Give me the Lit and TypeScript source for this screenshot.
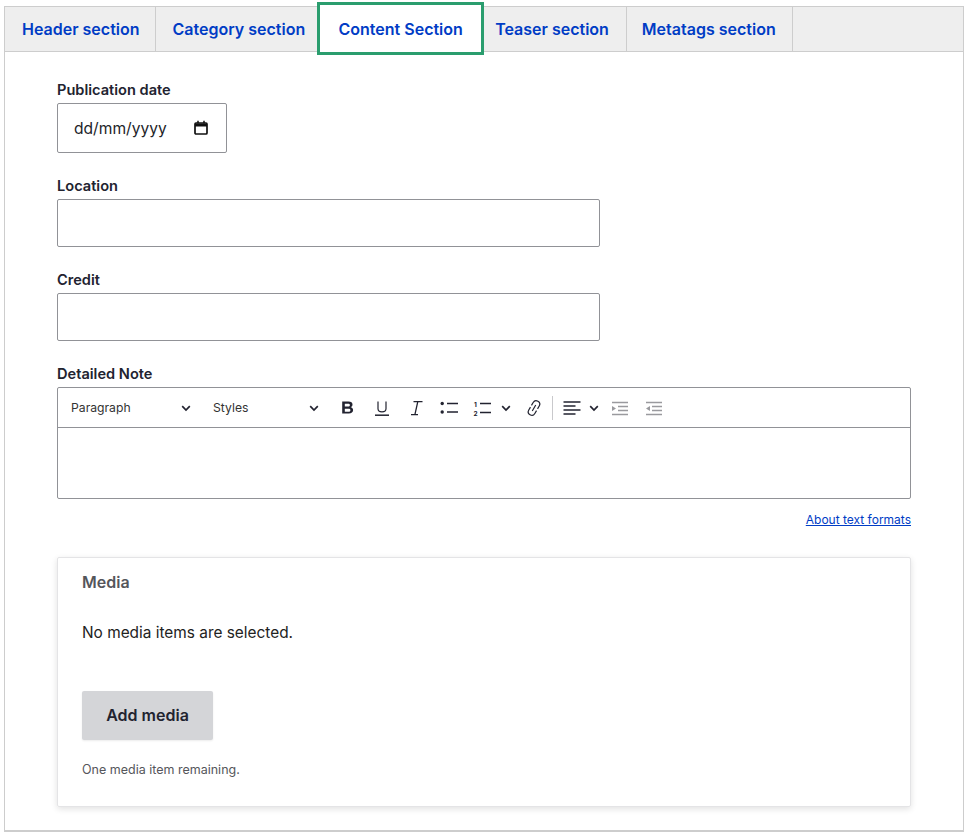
import { LitElement, html, css, svg } from "lit";
import { customElement } from "lit/decorators.js";

const chevron = html`<svg class="chev" width="12" height="12" viewBox="0 0 12 12" fill="none" stroke="#222330" stroke-width="1.7"><path d="M2.2 4.2 6 8l3.8-3.8"/></svg>`;

const icons: Record<string, unknown> = {
  bold: svg`<path fill="#222330" d="M4.2 3.5h6.3c2.6 0 4 1.2 4 3.1 0 1.3-.7 2.2-1.8 2.6 1.4.3 2.4 1.4 2.4 2.9 0 2.2-1.6 3.4-4.3 3.4H4.2V3.5Zm2.6 2.2v2.9h3.2c1.2 0 1.9-.5 1.9-1.5s-.7-1.4-1.9-1.4H6.800Zm0 5v3.1h3.500c1.400 0 2.100-.5 2.100-1.600s-.7-1.500-2.100-1.500H6.800Z"/>`,
  underline: svg`<path fill="none" stroke="#222330" stroke-width="1.2" d="M6 3.500v7.200c0 2.100 1.500 3.100 4 3.100s4-1 4-3.100V3.500"/><path stroke="#222330" stroke-width="1.500" d="M3 17.200h14"/>`,
  italic: svg`<path fill="none" stroke="#222330" stroke-width="1.300" d="M7.500 3.600h9M5 16.600h7M11.800 3.600 8.900 16.600"/>`,
  bullets: svg`<circle cx="3.200" cy="5.500" r="1.700" fill="#222330"/><circle cx="3.200" cy="14" r="1.700" fill="#222330"/><path stroke="#222330" stroke-width="1.500" d="M8 5.500h11M8 14h11"/>`,
  numbers: svg`<path stroke="#222330" stroke-width="1.500" d="M8 5.500h11M8 14.500h11"/><text x="2" y="9" font-family="Inter, sans-serif" font-size="6.500" font-weight="700" fill="#222330">1</text><text x="1.500" y="17.500" font-family="Inter, sans-serif" font-size="6.500" font-weight="700" fill="#222330">2</text>`,
  link: svg`<g fill="none" stroke="#222330" stroke-width="1.200" transform="rotate(-60 10 10)"><path d="M9 6.500H5.600a3.500 3.500 0 0 0 0 7H9"/><path d="M11 6.500h3.400a3.500 3.500 0 0 1 0 7H11"/><path d="M6.500 10h7"/></g>`,
  align: svg`<path stroke="#222330" stroke-width="1.500" d="M1.500 4h17M1.500 8h12M1.500 12h17M1.500 16h12"/>`,
  indent: svg`<path stroke="#9a9a9e" stroke-width="1.300" d="M2 4.500h16M8 8.500h10M8 12.500h10M2 16.500h16"/><path fill="#9a9a9e" d="m2 8 4 2.500L2 13V8Z"/>`,
  outdent: svg`<path stroke="#9a9a9e" stroke-width="1.300" d="M2 4.500h16M8 8.500h10M8 12.500h10M2 16.500h16"/><path fill="#9a9a9e" d="M6 8 2 10.500 6 13V8Z"/>`,
};

// gap = space before the item, the toolbar icons are not evenly spaced
const toolbar: { name: string; gap: number }[] = [
  { name: "bold", gap: 18 },
  { name: "underline", gap: 14 },
  { name: "italic", gap: 14 },
  { name: "bullets", gap: 13 },
  { name: "numbers", gap: 13 },
  { name: "chev", gap: 8 },
  { name: "link", gap: 12 },
  { name: "sep", gap: 8 },
  { name: "align", gap: 9 },
  { name: "chev", gap: 6 },
  { name: "indent", gap: 10 },
  { name: "outdent", gap: 14 },
];

const tabs: { label: string; cls: string }[] = [
  { label: "Header section", cls: "header" },
  { label: "Category section", cls: "category" },
  { label: "Content Section", cls: "active" },
  { label: "Teaser section", cls: "teaser" },
  { label: "Metatags section", cls: "metatags" },
];

@customElement("app-root")
export class AppRoot extends LitElement {
  static styles = css`
    :host {
      display: block;
      width: 968px;
      height: 837px;
      background: #fff;
      font-family: Inter, "Liberation Sans", sans-serif;
      color: #222330;
      overflow: hidden;
    }
    .frame {
      box-sizing: border-box;
      width: 960px;
      height: 826px;
      margin: 6px 0 0 4px;
      border: 1px solid #cdcdcd;
      border-width: 1px 1px 2px 1px;
    }
    .tabs {
      display: flex;
      height: 44px;
      background: #eeeeee;
      border-bottom: 1px solid #cdcdcd;
    }
    .tab {
      box-sizing: border-box;
      display: flex;
      align-items: center;
      padding: 0 16px;
      font-size: 16px;
      font-weight: 600;
      color: #003cc5;
      border-right: 1px solid #cdcdcd;
      white-space: nowrap;
    }
    .tab.header {
      padding: 0 15px 0 17px;
    }
    .tab.category {
      padding: 0 12px 0 17px;
      border-right: 0;
    }
    .tab.active {
      justify-content: center;
      width: 167px;
      height: 53px;
      margin: -5px 0 -4px 0;
      padding: 0;
      background: #fff;
      border: 3px solid #2a9d6e;
      position: relative;
    }
    .tab.teaser {
      padding: 0 17px 0 11px;
    }
    .tab.metatags {
      padding-left: 15px;
    }
    .body {
      padding: 29px 52px 0 52px;
    }
    .field {
      margin-bottom: 24px;
    }
    label {
      display: block;
      font-size: 14.6px;
      line-height: 18px;
      font-weight: 600;
      margin-bottom: 4px;
      color: #222330;
    }
    .date {
      box-sizing: border-box;
      display: flex;
      align-items: center;
      justify-content: space-between;
      width: 170px;
      height: 50px;
      padding: 0 17px 0 16px;
      border: 1px solid #919297;
      border-radius: 2px;
      font-size: 15.6px;
      color: #232429;
    }
    .input {
      box-sizing: border-box;
      width: 543px;
      height: 48px;
      border: 1px solid #919297;
      border-radius: 2px;
    }
    .editor {
      box-sizing: border-box;
      height: 112px;
      border: 1px solid #919297;
      border-radius: 2px;
    }
    .toolbar {
      box-sizing: border-box;
      display: flex;
      align-items: center;
      height: 40px;
      padding-left: 13px;
      border-bottom: 1px solid #919297;
    }
    .drop {
      display: flex;
      align-items: center;
      justify-content: space-between;
      font-size: 12.2px;
      color: #333;
    }
    .drop.para {
      width: 121px;
      margin-right: 21px;
    }
    .drop.styles {
      width: 107px;
    }
    .sep {
      width: 1px;
      height: 24px;
      background: #c9c9cc;
    }
    .toolbar svg {
      flex: none;
      display: block;
    }
    .formats {
      display: flex;
      justify-content: flex-end;
      margin-top: 13px;
      font-size: 12px;
      line-height: 15px;
    }
    .formats a {
      color: #003cc5;
      text-decoration: underline;
    }
    .media {
      box-sizing: border-box;
      height: 250px;
      margin-top: 30px;
      padding: 14px 24px 0 24px;
      border: 1px solid #e4e4e6;
      border-radius: 2px;
      box-shadow: 0 2px 6px rgba(0, 0, 0, 0.12);
    }
    .media h4 {
      margin: 0;
      font-size: 16px;
      line-height: 20px;
      font-weight: 600;
      color: #55565b;
    }
    .media p {
      margin: 31px 0 0 0;
      font-size: 15.4px;
      line-height: 20px;
      color: #222;
    }
    .add {
      box-sizing: border-box;
      display: flex;
      align-items: center;
      justify-content: center;
      width: 131px;
      height: 49px;
      margin-top: 48px;
      padding-bottom: 2px;
      background: #d4d5d8;
      border-radius: 2px;
      font-size: 16px;
      font-weight: 600;
      box-shadow: 0 1px 2px rgba(0, 0, 0, 0.08);
    }
    .media small {
      display: block;
      margin-top: 22px;
      font-size: 12.5px;
      line-height: 15px;
      color: #55565b;
    }
  `;

  render() {
    return html`
      <div class="frame">
        <div class="tabs">
          ${tabs.map((t) => html`<div class="tab ${t.cls}">${t.label}</div>`)}
        </div>
        <div class="body">
          <div class="field">
            <label>Publication date</label>
            <div class="date">
              <span>dd/mm/yyyy</span>
              <svg width="16" height="16" viewBox="0 0 16 16" fill="none" stroke="#111" stroke-width="1.700">
                <rect x="2" y="3" width="12" height="11" rx="1" />
                <path stroke-width="3" d="M2 5h12" />
                <path stroke-width="1.500" d="M5 .8v2.500M11 .8v2.500" />
              </svg>
            </div>
          </div>
          <div class="field">
            <label>Location</label>
            <div class="input"></div>
          </div>
          <div class="field">
            <label>Credit</label>
            <div class="input"></div>
          </div>
          <label>Detailed Note</label>
          <div class="editor">
            <div class="toolbar">
              <div class="drop para"><span>Paragraph</span>${chevron}</div>
              <div class="drop styles"><span>Styles</span>${chevron}</div>
              ${toolbar.map((item) => {
                const gap = `margin-left:${item.gap}px`;
                if (item.name === "sep") return html`<div class="sep" style=${gap}></div>`;
                if (item.name === "chev") return html`<span style=${gap}>${chevron}</span>`;
                return html`<svg style=${gap} width="20" height="20" viewBox="0 0 20 20">${icons[item.name]}</svg>`;
              })}
            </div>
          </div>
          <div class="formats"><a>About text formats</a></div>
          <div class="media">
            <h4>Media</h4>
            <p>No media items are selected.</p>
            <div class="add">Add media</div>
            <small>One media item remaining.</small>
          </div>
        </div>
      </div>
    `;
  }
}
